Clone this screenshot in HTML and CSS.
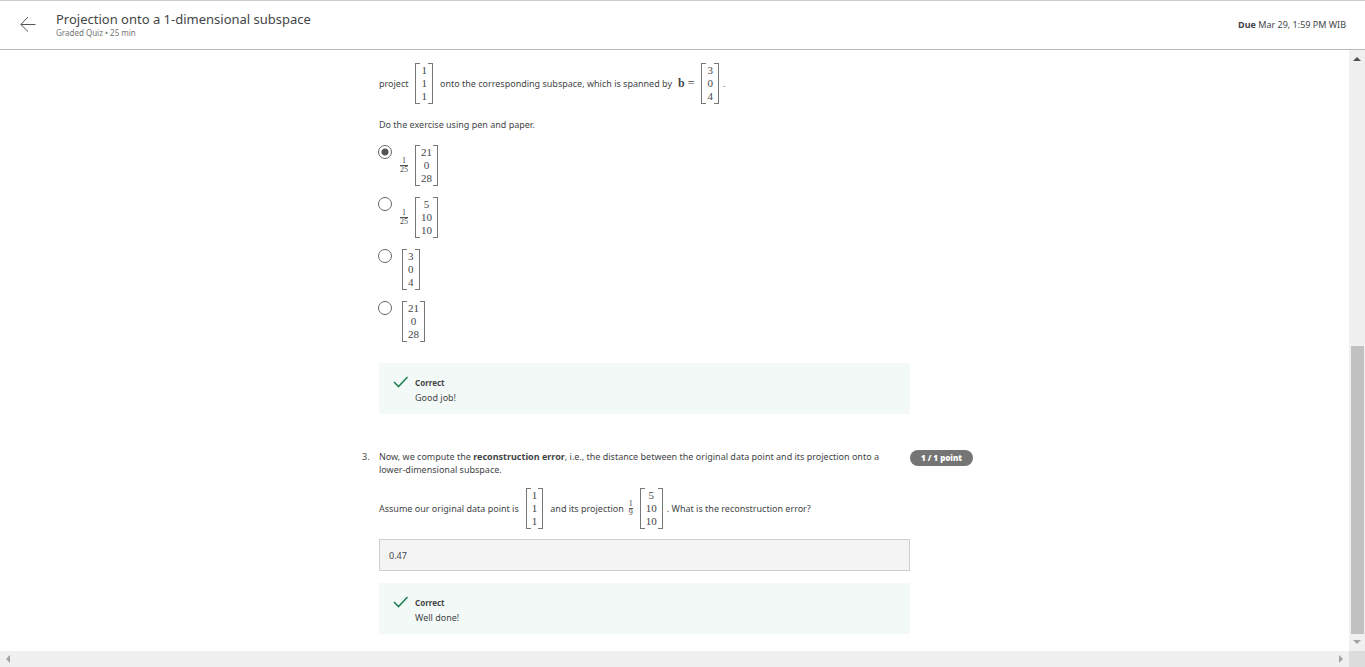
FILE: index.html
```html
<!DOCTYPE html>
<html lang="en">
<head>
<meta charset="utf-8">
<title>Projection onto a 1-dimensional subspace</title>
<link rel="stylesheet" href="styles.css">
</head>
<body>
<header class="topbar">
  <button class="back" type="button" aria-label="Back">
    <svg width="16" height="16" viewBox="0 0 16 16" fill="none" stroke="#555" stroke-width="1"><path d="M15.500 8.500H1M8 1L.8 8.500L8 15.500"/></svg>
  </button>
  <div class="heading">
    <h1 class="title">Projection onto a 1-dimensional subspace</h1>
    <p class="subtitle">Graded Quiz • 25 min</p>
  </div>
  <p class="due"><b>Due</b> Mar 29, 1:59 PM WIB</p>
</header>
<div class="viewport">
  <main class="page">
    <section class="question">
      <div class="content">
        <p class="mathline first"><span>project</span><span class="matrix"><i>1</i><i>1</i><i>1</i></span><span>onto the corresponding subspace, which is spanned by</span><span class="vector"><b>b</b> =</span><span class="matrix"><i>3</i><i>0</i><i>4</i></span><span>.</span></p>
        <p class="note">Do the exercise using pen and paper.</p>
        <div class="options">
          <label class="option"><input class="radio" type="radio" name="answer" checked><span class="math"><span class="frac"><i>1</i><i>25</i></span><span class="matrix"><i>21</i><i>0</i><i>28</i></span></span></label>
          <label class="option"><input class="radio" type="radio" name="answer"><span class="math"><span class="frac"><i>1</i><i>25</i></span><span class="matrix"><i>5</i><i>10</i><i>10</i></span></span></label>
          <label class="option"><input class="radio" type="radio" name="answer"><span class="math"><span class="matrix"><i>3</i><i>0</i><i>4</i></span></span></label>
          <label class="option"><input class="radio" type="radio" name="answer"><span class="math"><span class="matrix"><i>21</i><i>0</i><i>28</i></span></span></label>
        </div>
        <div class="feedback">
          <svg class="check" width="16" height="12" viewBox="0 0 16 12" fill="none" stroke="#1f8354" stroke-width="1.600"><path d="M1 6L5.500 10.500L14.500 1"/></svg>
          <div><p class="verdict">Correct</p><p>Good job!</p></div>
        </div>
      </div>
    </section>
    <section class="question">
      <span class="number">3.</span>
      <div class="content">
        <p class="prompt">Now, we compute the <b>reconstruction error</b>, i.e., the distance between the original data point and its projection onto a lower-dimensional subspace.</p>
        <p class="mathline second"><label for="error">Assume our original data point is</label><span class="matrix"><i>1</i><i>1</i><i>1</i></span><span>and its projection</span><span class="frac"><i>1</i><i>9</i></span><span class="matrix"><i>5</i><i>10</i><i>10</i></span><span>. What is the reconstruction error?</span></p>
        <input class="answer" id="error" type="text" value="0.47" readonly>
        <div class="feedback">
          <svg class="check" width="16" height="12" viewBox="0 0 16 12" fill="none" stroke="#1f8354" stroke-width="1.600"><path d="M1 6L5.500 10.500L14.500 1"/></svg>
          <div><p class="verdict">Correct</p><p>Well done!</p></div>
        </div>
      </div>
      <span class="points">1 / 1 point</span>
    </section>
  </main>
  <div class="vbar">
    <svg width="16" height="16" viewBox="0 0 16 16"><path d="M4 11h8L8 7z" fill="#505050"/></svg>
    <div class="thumb"></div>
    <svg width="16" height="16" viewBox="0 0 16 16"><path d="M4 5h8L8 9z" fill="#a3a3a3"/></svg>
  </div>
</div>
<div class="hbar">
  <svg width="16" height="16" viewBox="0 0 16 16"><path d="M10 4v8L6 8z" fill="#a3a3a3"/></svg>
  <svg width="16" height="16" viewBox="0 0 16 16"><path d="M6 4v8L10 8z" fill="#a3a3a3"/></svg>
  <div class="corner"></div>
</div>
</body>
</html>
```
FILE: styles.css
```css
* { box-sizing: border-box; }
body {
  margin: 0;
  height: 100vh;
  display: flex;
  flex-direction: column;
  font: 9px/13px "Noto Sans", "Open Sans", sans-serif;
  color: #434648;
  background: #fff;
}
p, h1 { margin: 0; }
i { font-style: normal; }
.topbar {
  display: flex;
  align-items: center;
  flex: none;
  height: 50px;
  padding: 0 19px 2px 20px;
  border-top: 1px solid #ccc;
  border-bottom: 1px solid #b8b8b8;
}
.back { display: flex; padding: 0; border: 0; background: none; }
.heading { flex: 1; margin-left: 20px; }
.title { font-size: 13px; line-height: 16px; font-weight: 400; }
.subtitle { font-size: 8px; line-height: 11px; color: #757575; }
.viewport { display: flex; flex: 1; min-height: 0; }
.page { flex: 1; overflow: hidden; padding-top: 13px; }
.question {
  display: grid;
  grid-template-columns: 17px minmax(0, 531px) 63px;
  width: 625px;
  max-width: 100%;
  margin: 0 auto 36px;
}
.content { grid-column: 2; }
.prompt { padding-right: 15px; }
.mathline { display: flex; align-items: center; white-space: pre; }
.mathline .matrix { margin: 0 7px; }
.mathline .matrix:has(+ span:last-child) { margin-right: 4px; }
.mathline .frac { margin-left: 5px; }
.vector { margin-left: 6px; font: 12px/13px "Liberation Serif", serif; }
.matrix {
  position: relative;
  display: inline-flex;
  flex-direction: column;
  justify-content: center;
  align-items: center;
  height: 41px;
  padding: 0 6px;
  font: 11px/13px "Liberation Serif", serif;
}
.matrix::before, .matrix::after {
  content: "";
  position: absolute;
  top: 0;
  bottom: 0;
  width: 4px;
  border: 1px solid #777;
}
.matrix::before { left: 0; border-right: 0; }
.matrix::after { right: 0; border-left: 0; }
.frac {
  display: inline-flex;
  flex-direction: column;
  align-items: center;
  font: 8px/8px "Liberation Serif", serif;
}
.frac i:last-child { border-top: 1px solid #555; }
.note { margin-top: 14px; }
.options { display: grid; gap: 12px; margin-top: 14px; }
.option { display: flex; align-items: flex-start; gap: 8px; height: 40px; }
.math { display: flex; align-items: center; gap: 7px; }
.option .math:not(:has(.frac)) { margin-left: 2px; }
.radio {
  appearance: none;
  width: 14px;
  height: 14px;
  margin: 0 0 0 -1px;
  border: 1px solid #666;
  border-radius: 50%;
}
.radio:checked { background: radial-gradient(#555 3px, transparent 4px); }
.feedback {
  display: flex;
  gap: 6px;
  padding: 12px 14px 9px;
  background: #f3f9f7;
  line-height: 15px;
}
.options + .feedback { margin-top: 22px; }
.check { flex: none; margin-top: 1px; }
.verdict { font-size: 8px; font-weight: 700; }
.points {
  height: 16px;
  border-radius: 8px;
  background: #757575;
  color: #fff;
  font: 800 8px/16px "Open Sans", sans-serif;
  text-align: center;
}
.second { margin-top: 12px; }
.answer {
  display: block;
  width: 100%;
  height: 32px;
  margin: 10px 0 12px;
  padding: 0 9px;
  border: 1px solid #d0d0d0;
  background: #f4f4f4;
  color: inherit;
  font: inherit;
}
.vbar { display: flex; flex-direction: column; width: 16px; background: #f0f0f0; }
.thumb { height: 288px; margin: auto 1px 1px 2px; background: #c1c1c1; }
.hbar { display: flex; flex: none; height: 16px; background: #f0f0f0; }
.hbar svg:first-child { margin-right: auto; }
.corner { width: 16px; background: #dcdcdc; }
```
